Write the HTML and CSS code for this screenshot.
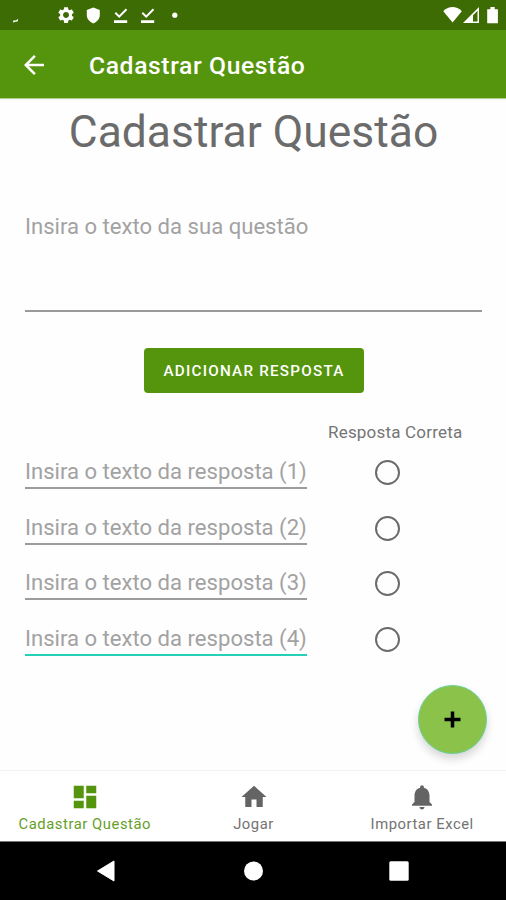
FILE: index.html
```html
<!DOCTYPE html>
<html lang="pt-BR">
<head>
<meta charset="utf-8">
<title>Cadastrar Questão</title>
<link rel="stylesheet" href="styles.css">
</head>
<body>
<div class="screen">
  <div class="status-bar">
    <svg class="status-icons" width="506" height="30" viewBox="0 0 506 30" fill="#fff" aria-hidden="true">
      <path d="M12.800 22.500l.8-2.200 2.200.2 2.400-1.700-.6 2.700-2 .3z"/>
      <g transform="translate(56.200 5.200) scale(.82)"><path d="M19.140 12.940c.04-.3.06-.61.06-.94 0-.32-.02-.64-.07-.94l2.030-1.580c.18-.14.23-.41.12-.61l-1.920-3.320c-.12-.22-.37-.29-.59-.22l-2.390.96c-.5-.38-1.030-.7-1.620-.94l-.36-2.540c-.04-.24-.24-.41-.48-.41h-3.840c-.24 0-.43.17-.47.41l-.36 2.540c-.59.24-1.130.57-1.620.94l-2.390-.96c-.22-.08-.47 0-.59.22L2.740 8.870c-.12.21-.08.47.12.61l2.030 1.580c-.05.3-.09.63-.09.94s.02.64.07.94l-2.030 1.580c-.18.14-.23.41-.12.61l1.920 3.320c.12.22.37.29.59.22l2.390-.96c.5.38 1.030.7 1.620.94l.36 2.540c.05.24.24.41.48.41h3.840c.24 0 .44-.17.47-.41l.36-2.540c.59-.24 1.130-.56 1.620-.94l2.390.96c.22.08.47 0 .59-.22l1.920-3.320c.12-.22.07-.47-.12-.61l-2.010-1.580zM12 15.600c-1.980 0-3.600-1.620-3.600-3.600s1.620-3.600 3.600-3.600 3.600 1.620 3.600 3.600-1.620 3.600-3.600 3.600z"/></g>
      <path d="M93.300 7.500l6.500 2.600v5c0 3.900-2.700 6.900-6.500 8.300-3.800-1.400-6.500-4.400-6.500-8.300v-5z"/>
      <path id="done" d="M114 20.300h13.200v2.700H114zM119.200 18l-4.600-4.500 1.400-1.400 3.200 3.100 6.600-6.700 1.400 1.400z"/>
      <use href="#done" x="27"/>
      <circle cx="174.800" cy="15.200" r="2.600"/>
      <path d="M443.300 11.200c5.500-5.600 13-5.600 18.500 0l-9.200 11.300z"/>
      <path fill-rule="evenodd" d="M463 23L479 7v16zM473 15.300v6.100h4.500V10.800z"/>
      <path d="M487.200 9.200h3.200V7h4.300v2.200h3.200v14.100h-10.700z"/>
    </svg>
  </div>
  <header class="app-bar">
    <svg class="back" width="30" height="30" viewBox="0 0 24 24" fill="#fff" aria-label="Voltar"><path d="M20 11H7.830l5.590-5.590L12 4l-8 8 8 8 1.410-1.410L7.830 13H20z"/></svg>
    <span class="app-title">Cadastrar Questão</span>
  </header>
  <main class="content">
    <h1 class="heading">Cadastrar Questão</h1>
    <div class="question"><span class="hint">Insira o texto da sua questão</span></div>
    <button class="add" type="button">ADICIONAR RESPOSTA</button>
    <div class="column-label">Resposta Correta</div>
    <div class="answers">
      <div class="answer"><div class="field"><span class="hint">Insira o texto da resposta (1)</span></div><span class="radio"></span></div>
      <div class="answer"><div class="field"><span class="hint">Insira o texto da resposta (2)</span></div><span class="radio"></span></div>
      <div class="answer"><div class="field"><span class="hint">Insira o texto da resposta (3)</span></div><span class="radio"></span></div>
      <div class="answer"><div class="field focused"><span class="hint">Insira o texto da resposta (4)</span></div><span class="radio"></span></div>
    </div>
    <button class="fab" type="button" aria-label="Adicionar"><svg width="17" height="17" viewBox="0 0 17 17"><path d="M8.500 .5v16M.5 8.500h16" stroke="#000" stroke-width="3.500"/></svg></button>
  </main>
  <nav class="tabs">
    <div class="tab active">
      <svg width="30" height="30" viewBox="0 0 24 24" fill="currentColor"><path d="M3 13h8V3H3v10zm0 8h8v-6H3v6zm10 0h8V11h-8v10zm0-18v6h8V3h-8z"/></svg>
      <span class="tab-label">Cadastrar Questão</span>
    </div>
    <div class="tab">
      <svg width="30" height="30" viewBox="0 0 24 24" fill="currentColor"><path d="M10 20v-6h4v6h5v-8h3L12 3 2 12h3v8z"/></svg>
      <span class="tab-label">Jogar</span>
    </div>
    <div class="tab">
      <svg width="30" height="30" viewBox="0 0 24 24" fill="currentColor"><path d="M12 22c1.100 0 2-.9 2-2h-4c0 1.100.89 2 2 2zm6-6v-5c0-3.070-1.640-5.640-4.500-6.320V4c0-.83-.67-1.500-1.500-1.500s-1.500.67-1.500 1.500v.68C7.630 5.360 6 7.920 6 11v5l-2 2v1h16v-1l-2-2z"/></svg>
      <span class="tab-label">Importar Excel</span>
    </div>
  </nav>
  <div class="system-nav">
    <svg width="20" height="22" viewBox="0 0 20 22" fill="#fff"><path d="M1.500 11L18 1v20z" stroke="#fff" stroke-linejoin="round"/></svg>
    <svg width="20" height="20" viewBox="0 0 20 20" fill="#fff"><circle cx="10.500" cy="10" r="9.500"/></svg>
    <svg width="20" height="20" viewBox="0 0 20 20" fill="#fff"><rect x=".3" y=".3" width="19.400" height="19.400" rx="1.500"/></svg>
  </div>
</div>
</body>
</html>
```
FILE: styles.css
```css
* { box-sizing: border-box; }
body {
  margin: 0;
  font-family: Roboto, "Liberation Sans", sans-serif;
  background: #fefefe;
}
.screen {
  width: 506px;
  height: 900px;
  display: flex;
  flex-direction: column;
  overflow: hidden;
}
.status-bar { height: 30px; background: #3d6b04; }
.status-icons { display: block; }
.app-bar {
  height: 68px;
  background: #55950d;
  color: #fff;
  display: flex;
  align-items: center;
  padding: 1px 19px 0;
  box-shadow: 0 1px 1px #b5cf93;
}
.app-title {
  margin-left: 40px;
  padding-top: 2px;
  font-size: 24.700px;
  font-weight: 500;
  letter-spacing: .6px;
}
.content {
  position: relative;
  height: 672px;
  padding: 0 24px 0 25px;
  display: flex;
  flex-direction: column;
}
.heading {
  margin: 8px 0 0;
  height: 52px;
  line-height: 52px;
  text-align: center;
  font-size: 44.400px;
  font-weight: 400;
  color: #6b6b6b;
  white-space: nowrap;
}
.hint {
  display: block;
  font-size: 22.100px;
  line-height: 26px;
  color: #a2a2a2;
  white-space: nowrap;
}
.question {
  margin-top: 55px;
  height: 99px;
  border-bottom: 2px solid #9a9a9a;
}
.add {
  margin: 36px 0 0 119px;
  width: 220px;
  height: 45px;
  padding: 1px 0 0;
  border: 0;
  border-radius: 4px;
  background: #55950d;
  color: #fff;
  font: 500 15.200px Roboto, sans-serif;
  letter-spacing: 1.250px;
  white-space: nowrap;
}
.column-label {
  margin: 28px 0 0 303px;
  height: 22px;
  line-height: 22px;
  font-size: 17px;
  letter-spacing: .2px;
  color: #757575;
  white-space: nowrap;
}
.answers { margin-top: 1.400px; }
.answer {
  height: 55.400px;
  display: flex;
  align-items: flex-start;
}
.field {
  width: 282px;
  height: 45px;
  padding-top: 14px;
  border-bottom: 2px solid #9c9c9c;
}
.field.focused { border-color: #25cfb8; }
.radio {
  width: 25px;
  height: 25px;
  margin: 16px 0 0 67.500px;
  border: 2.500px solid #6b6b6b;
  border-radius: 50%;
}
.fab {
  position: absolute;
  left: 418px;
  top: 587px;
  width: 69px;
  height: 69px;
  padding: 0;
  display: flex;
  align-items: center;
  justify-content: center;
  border: 1px solid #69d09a;
  border-radius: 50%;
  background: #8bc34a;
  box-shadow: 0 5px 8px rgba(0, 0, 0, .16);
}
.tabs {
  height: 72px;
  display: flex;
  background: #fff;
  border-top: 1px solid #f3f3f3;
  border-bottom: 1px solid #777;
}
.tab {
  flex: 1;
  display: flex;
  flex-direction: column;
  align-items: center;
  padding: 11px 0 0 1px;
  color: #646464;
}
.tab-label {
  margin-top: 3px;
  font-size: 14.800px;
  line-height: 18px;
  letter-spacing: .55px;
  white-space: nowrap;
  opacity: .9;
}
.tab.active { color: #55950d; }
.system-nav {
  height: 58px;
  background: #000;
  display: flex;
  justify-content: space-between;
  align-items: center;
  padding: 0 97px 0 96px;
}
```
